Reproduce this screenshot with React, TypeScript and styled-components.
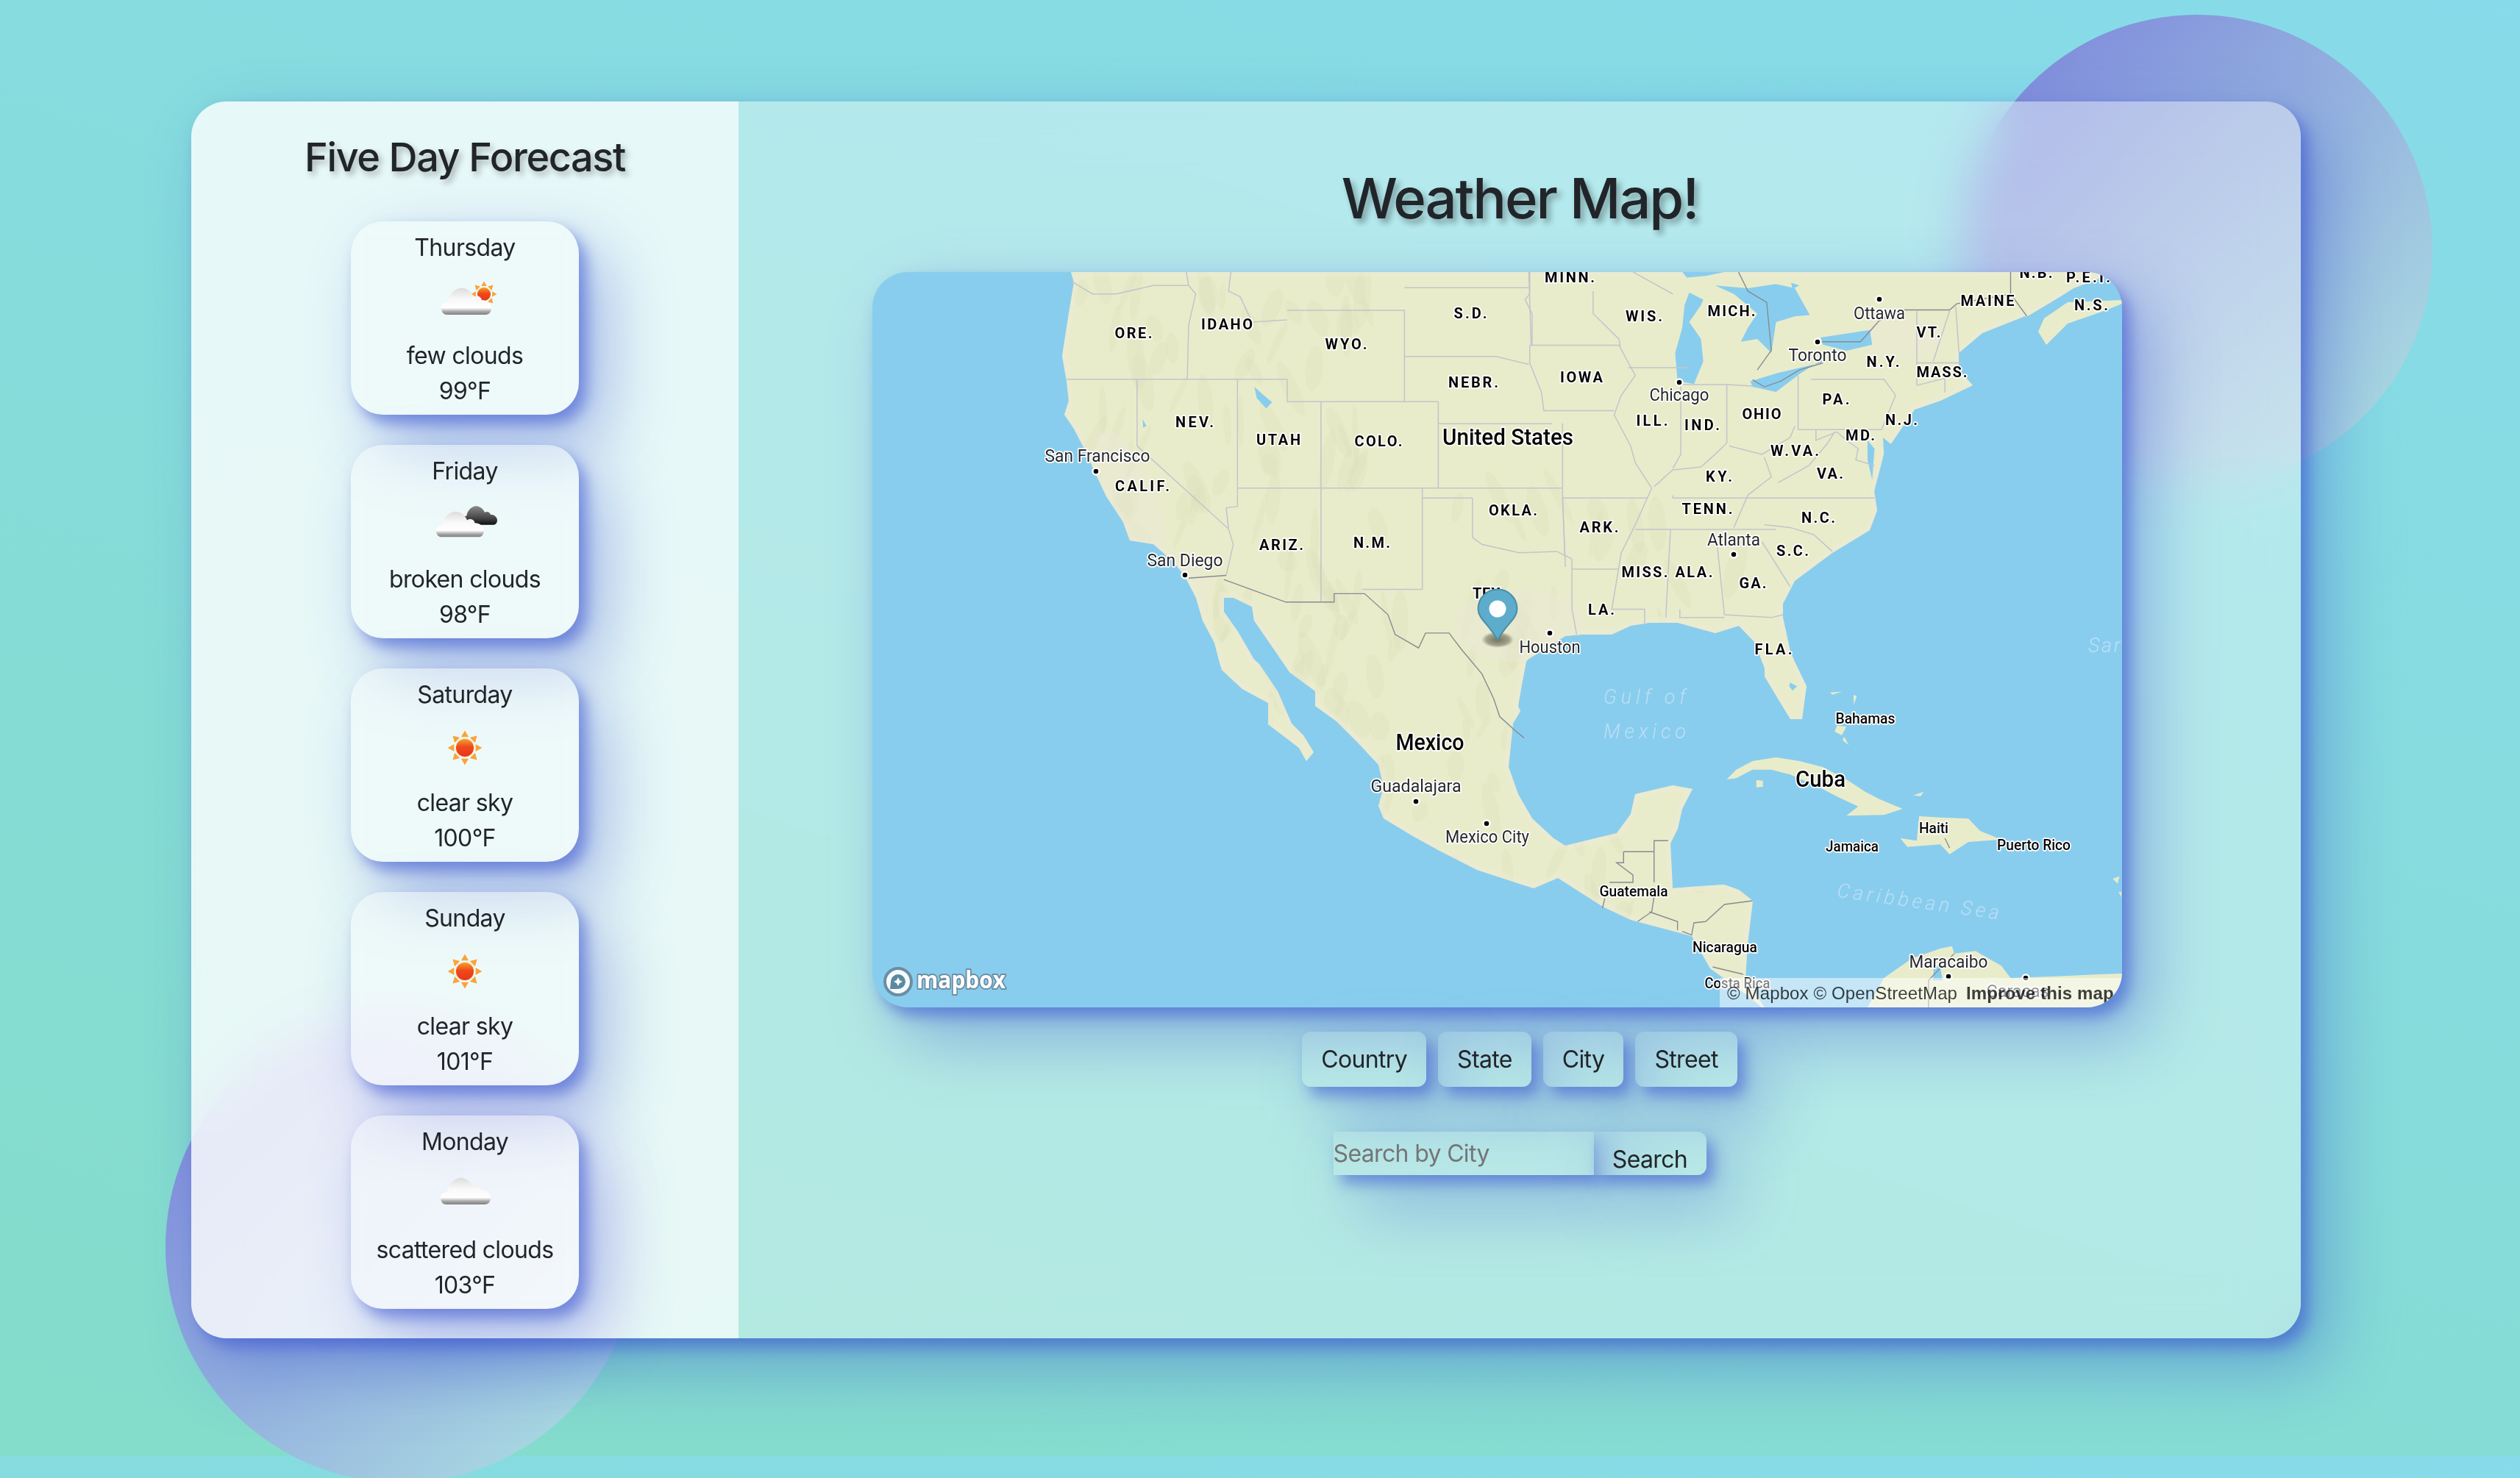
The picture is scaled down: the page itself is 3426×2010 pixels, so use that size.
import React from 'react';
import styled, { createGlobalStyle } from 'styled-components';

const GlobalStyle = createGlobalStyle`
  html { overflow: hidden; }
  body {
    margin: 0;
    height: 1980px;
    background: linear-gradient(198deg, #87dbea 0%, #84dcca 100%);
    font-family: Inter, "Liberation Sans", sans-serif;
    color: #212529;
  }
  input::placeholder { color: #757575; opacity: 1; }
`;

const glowShadow = '10px 12px 20px rgba(58, 84, 208, 0.55), 36px 40px 90px rgba(58, 84, 208, 0.4)';

const Page = styled.div`
  padding: 138px 0 0 260px;
  box-sizing: border-box;
  height: 1980px;
`;

const Circle = styled.div<{ $left: number; $top: number }>`
  position: absolute;
  left: ${p => p.$left}px;
  top: ${p => p.$top}px;
  width: 640px;
  height: 640px;
  border-radius: 50%;
  background: linear-gradient(135deg, #7f8adc 8%, #a9d8e1 88%);
`;

const Panel = styled.main`
  position: relative;
  width: 2868px;
  height: 1682px;
  display: flex;
  border-radius: 48px;
  box-shadow: ${glowShadow};

  &::before {
    content: '';
    position: absolute;
    inset: 0;
    border-radius: 48px;
    background: rgba(255, 255, 255, 0.38);
    backdrop-filter: blur(34px);
  }
`;

const Sidebar = styled.aside`
  position: relative;
  width: 744px;
  flex: none;
  border-radius: 48px 0 0 48px;
  background: rgba(255, 255, 255, 0.68);
  display: flex;
  flex-direction: column;
  align-items: center;
  padding-top: 42px;
  box-sizing: border-box;
`;

const SideTitle = styled.h2`
  margin: 0 0 54px;
  font-size: 54px;
  line-height: 67px;
  font-weight: 550;
  letter-spacing: -1.4px;
  text-shadow: 4px 5px 8px rgba(0, 0, 0, 0.3);
`;

const CardList = styled.div`
  display: flex;
  flex-direction: column;
  gap: 41px;
`;

const Card = styled.article`
  width: 310px;
  height: 263px;
  padding-top: 12px;
  box-sizing: border-box;
  border-radius: 44px;
  background: rgba(255, 255, 255, 0.3);
  backdrop-filter: blur(10px);
  box-shadow: ${glowShadow};
  display: flex;
  flex-direction: column;
  align-items: center;
  font-size: 32px;
  line-height: 48px;
  letter-spacing: -0.65px;
`;

const IconBox = styled.svg`
  width: 100px;
  height: 100px;
  display: block;
  margin-bottom: -1px;
`;

const Content = styled.section`
  position: relative;
  flex: 1;
  display: flex;
  flex-direction: column;
  align-items: center;
`;

const MainTitle = styled.h1`
  margin: 85px 0 55px;
  font-size: 76px;
  line-height: 92px;
  font-weight: 550;
  letter-spacing: -2.1px;
  text-shadow: 5px 6px 9px rgba(0, 0, 0, 0.32);
`;

const MapFrame = styled.div`
  position: relative;
  align-self: flex-start;
  margin-left: 182px;
  width: 1699px;
  height: 1000px;
  border-radius: 48px;
  background: #89cdee;
  box-shadow: ${glowShadow};
`;

const MapClip = styled.div`
  position: relative;
  height: 100%;
  border-radius: 48px;
  overflow: hidden;
`;

const MapSvg = styled.svg`
  display: block;
  width: 1699px;
  height: 1000px;
`;

const Attribution = styled.div`
  position: absolute;
  right: 0;
  bottom: 0;
  width: 547px;
  height: 40px;
  box-sizing: border-box;
  padding-left: 10px;
  background: rgba(255, 255, 255, 0.5);
  font-family: "Liberation Sans", Arial, sans-serif;
  font-size: 24px;
  line-height: 42px;
  letter-spacing: 0.12px;
  color: rgba(0, 0, 0, 0.75);
  white-space: nowrap;
  overflow: hidden;
`;

const Improve = styled.b`
  margin-left: 12px;
`;

const ButtonRow = styled.div`
  display: flex;
  gap: 16px;
  margin-top: 33px;
`;

const PillButton = styled.button`
  height: 75px;
  padding: 0 26px;
  border: 0;
  border-radius: 12px;
  background: rgba(255, 255, 255, 0.1);
  backdrop-filter: blur(14px);
  box-shadow: ${glowShadow};
  font-family: inherit;
  font-size: 32px;
  line-height: 48px;
  color: #212529;
  letter-spacing: -0.65px;
`;

const SearchRow = styled.form`
  display: flex;
  margin-top: 61px;
`;

const SearchInput = styled.input`
  width: 354px;
  height: 59px;
  padding: 0;
  box-sizing: border-box;
  border: 0;
  outline: 0;
  background: rgba(255, 255, 255, 0.1);
  backdrop-filter: blur(14px);
  box-shadow: ${glowShadow};
  font-family: inherit;
  font-size: 32px;
  letter-spacing: -0.65px;
`;

const SearchButton = styled.button`
  width: 153px;
  height: 59px;
  padding: 14px 0 0;
  box-sizing: border-box;
  border: 0;
  border-radius: 0 12px 12px 0;
  background: rgba(255, 255, 255, 0.1);
  backdrop-filter: blur(14px);
  box-shadow: ${glowShadow};
  font-family: inherit;
  font-size: 32px;
  line-height: 48px;
  color: #212529;
  letter-spacing: -0.65px;
`;

/* ---- map parts ---- */

const Land = styled.path`
  fill: #e9ecca;
`;

const CoastWash = styled.path`
  fill: none;
  stroke: #ecead6;
  stroke-width: 14;
  opacity: 0.5;
`;

const Water = styled.path`
  fill: #89cdee;
`;

const Ridge = styled.ellipse`
  fill: #d8ddb4;
  opacity: 0.2;
`;

const Pale = styled.ellipse`
  fill: #ece8da;
  opacity: 0.4;
`;

const StateLine = styled.path`
  fill: none;
  stroke: #c2c4cc;
  stroke-width: 1.5;
  vector-effect: non-scaling-stroke;
`;

const NationLine = styled.path`
  fill: none;
  stroke: #868b92;
  stroke-width: 1.4;
  vector-effect: non-scaling-stroke;
`;

type LabelKind = 'state' | 'city' | 'country' | 'small' | 'sea';

const sizes: Record<LabelKind, number> = { state: 20, city: 24, country: 32, small: 21, sea: 27 };
const weights: Record<LabelKind, number> = { state: 700, city: 400, country: 500, small: 500, sea: 300 };

const MapText = styled.text<{ $kind: LabelKind }>`
  font-family: Roboto, "Liberation Sans", sans-serif;
  font-size: ${p => sizes[p.$kind]}px;
  font-weight: ${p => weights[p.$kind]};
  font-style: ${p => (p.$kind === 'sea' ? 'italic' : 'normal')};
  fill: ${p => (p.$kind === 'sea' ? '#bcdff5' : p.$kind === 'city' ? '#26282c' : '#050505')};
  stroke: ${p => (p.$kind === 'sea' ? 'none' : '#ffffff')};
  stroke-width: 3.5px;
  stroke-linejoin: round;
  paint-order: stroke;
  text-anchor: middle;
  dominant-baseline: central;
`;

const CityDot = styled.circle`
  fill: #000;
  stroke: #fff;
  stroke-width: 2.5;
`;

const LogoWord = styled.text`
  font-family: "Open Sans", "Liberation Sans", sans-serif;
  font-weight: 700;
  font-size: 33px;
  fill: #fff;
  stroke: #6b8ea3;
  stroke-width: 4px;
  stroke-linejoin: round;
  paint-order: stroke;
`;

const FRAME2 = 'translate(-26,-20) scale(0.6378,0.3827)';
const FRAME3 = 'translate(814,-20) scale(0.6378,0.3827)';
const FRAME5 = 'translate(814,530) scale(0.6378,0.3333)';

const MAIN_LAND =
  'M270,0 L274,14 267,56 258,114 264,148 267,175 261,194 274,213 290,244 302,271 318,305 341,340 350,365 382,370 408,393 424,412 440,443 449,474 465,504 472,531 475,541 503,567 538,586 538,615 580,647 590,665 600,653 586,630 570,614 551,570 526,533 519,527 497,489 478,462 478,443 491,443 516,455 519,474 548,516 567,544 602,570 602,590 631,611 660,640 688,670 695,700 688,726 695,743 733,766 771,787 822,813 880,832 899,838 932,824 993,863 1031,881 1095,898 1114,903 1139,947 1190,984 1209,1000 1213,1000 1187,960 1190,914 1197,855 1178,840 1158,833 1127,835 1088,838 1085,777 1095,757 1101,730 1115,703 1088,698 1037,710 1031,737 1012,763 983,770 942,780 926,770 897,743 878,710 865,673 871,614 881,597 878,590 883,561 889,530 891,527 942,495 964,493 1005,493 1031,481 1056,477 1095,477 1146,491 1178,481 1200,504 1213,539 1213,550 1248,608 1264,608 1270,563 1254,530 1248,516 1238,470 1238,451 1254,420 1305,382 1356,351 1366,324 1362,298 1375,248 1401,210 1417,187 1452,175 1496,154 1477,133 1477,110 1509,83 1567,60 1569,61 1614,34 1633,22 1665,10 1683,0 Z';

const NOVA_SCOTIA = 'M1585,81 L1596,99 1625,70 1677,52 1699,43 1699,38 1625,41 1593,63 Z';

const ISLANDS = [
  'M545,480 L565,440 600,405 650,390 700,405 750,430 800,480 840,530 870,560 920,600 880,625 800,628 825,590 780,550 740,510 680,460 640,440 600,440 565,475 Z',
  'M608,482 L622,485 622,510 608,512 Z',
  'M915,720 L950,730 955,630 1000,635 1060,640 1085,690 1130,725 1060,735 1020,785 1000,745 930,755 Z',
  'M780,260 L800,265 790,300 775,285 Z',
  'M795,305 L805,340 792,320 Z',
  'M765,125 L790,122 770,134 Z',
  'M815,135 L822,140 816,175 Z',
  'M942,545 L965,530 958,548 Z',
  'M845,1410 L880,1290 940,1210 1000,1170 1025,1160 1030,1190 1075,1180 1130,1240 1150,1290 1290,1280 1340,1275 1390,1272 1390,1410 Z',
  'M1368,885 L1382,875 1378,905 Z',
  'M1380,938 L1386,940 1386,960 Z',
];

type Label = { t: string; x: number; y: number; w: number; k: LabelKind; r?: number };

const LABELS: Label[] = [
  { t: 'MINN.', x: 948, y: 7, w: 68, k: 'state' },
  { t: 'S.D.', x: 813, y: 56, w: 45, k: 'state' },
  { t: 'ORE.', x: 355, y: 83, w: 51, k: 'state' },
  { t: 'IDAHO', x: 482, y: 71, w: 70, k: 'state' },
  { t: 'WYO.', x: 644, y: 98, w: 57, k: 'state' },
  { t: 'NEBR.', x: 817, y: 150, w: 68, k: 'state' },
  { t: 'IOWA', x: 964, y: 143, w: 58, k: 'state' },
  { t: 'WIS.', x: 1049, y: 60, w: 50, k: 'state' },
  { t: 'MICH.', x: 1168, y: 53, w: 65, k: 'state' },
  { t: 'MAINE', x: 1516, y: 39, w: 73, k: 'state' },
  { t: 'N.S.', x: 1657, y: 45, w: 46, k: 'state' },
  { t: 'P.E.I.', x: 1653, y: 7, w: 60, k: 'state' },
  { t: 'N.B.', x: 1582, y: 1, w: 45, k: 'state' },
  { t: 'VT.', x: 1436, y: 82, w: 33, k: 'state' },
  { t: 'N.Y.', x: 1374, y: 122, w: 45, k: 'state' },
  { t: 'MASS.', x: 1454, y: 136, w: 69, k: 'state' },
  { t: 'PA.', x: 1310, y: 173, w: 37, k: 'state' },
  { t: 'ILL.', x: 1060, y: 202, w: 43, k: 'state' },
  { t: 'IND.', x: 1128, y: 208, w: 48, k: 'state' },
  { t: 'OHIO', x: 1209, y: 193, w: 53, k: 'state' },
  { t: 'N.J.', x: 1399, y: 201, w: 44, k: 'state' },
  { t: 'MD.', x: 1343, y: 222, w: 40, k: 'state' },
  { t: 'W.VA.', x: 1254, y: 243, w: 66, k: 'state' },
  { t: 'VA.', x: 1302, y: 274, w: 36, k: 'state' },
  { t: 'KY.', x: 1151, y: 278, w: 36, k: 'state' },
  { t: 'TENN.', x: 1135, y: 322, w: 69, k: 'state' },
  { t: 'N.C.', x: 1286, y: 334, w: 46, k: 'state' },
  { t: 'ARK.', x: 988, y: 347, w: 53, k: 'state' },
  { t: 'S.C.', x: 1251, y: 379, w: 44, k: 'state' },
  { t: 'MISS.', x: 1050, y: 408, w: 63, k: 'state' },
  { t: 'ALA.', x: 1117, y: 408, w: 51, k: 'state' },
  { t: 'GA.', x: 1197, y: 423, w: 37, k: 'state' },
  { t: 'LA.', x: 991, y: 459, w: 36, k: 'state' },
  { t: 'FLA.', x: 1225, y: 513, w: 51, k: 'state' },
  { t: 'OKLA.', x: 871, y: 324, w: 66, k: 'state' },
  { t: 'TEX.', x: 838, y: 437, w: 44, k: 'state' },
  { t: 'NEV.', x: 438, y: 204, w: 52, k: 'state' },
  { t: 'UTAH', x: 552, y: 228, w: 60, k: 'state' },
  { t: 'COLO.', x: 688, y: 230, w: 65, k: 'state' },
  { t: 'CALIF.', x: 367, y: 291, w: 74, k: 'state' },
  { t: 'ARIZ.', x: 556, y: 371, w: 60, k: 'state' },
  { t: 'N.M.', x: 679, y: 368, w: 50, k: 'state' },
  { t: 'Ottawa', x: 1369, y: 56, w: 70, k: 'city' },
  { t: 'Toronto', x: 1285, y: 113, w: 79, k: 'city' },
  { t: 'Chicago', x: 1097, y: 167, w: 81, k: 'city' },
  { t: 'Atlanta', x: 1171, y: 364, w: 72, k: 'city' },
  { t: 'Houston', x: 921, y: 510, w: 83, k: 'city' },
  { t: 'San Francisco', x: 306, y: 250, w: 143, k: 'city' },
  { t: 'San Diego', x: 425, y: 392, w: 103, k: 'city' },
  { t: 'Guadalajara', x: 739, y: 699, w: 123, k: 'city' },
  { t: 'Mexico City', x: 836, y: 768, w: 114, k: 'city' },
  { t: 'Maracaibo', x: 1463, y: 938, w: 107, k: 'city' },
  { t: 'Caracas', x: 1557, y: 978, w: 85, k: 'city' },
  { t: 'United States', x: 864, y: 224, w: 178, k: 'country' },
  { t: 'Mexico', x: 758, y: 639, w: 93, k: 'country' },
  { t: 'Cuba', x: 1289, y: 689, w: 68, k: 'country' },
  { t: 'Bahamas', x: 1350, y: 607, w: 81, k: 'small' },
  { t: 'Haiti', x: 1443, y: 756, w: 40, k: 'small' },
  { t: 'Jamaica', x: 1332, y: 781, w: 72, k: 'small' },
  { t: 'Puerto Rico', x: 1579, y: 779, w: 100, k: 'small' },
  { t: 'Guatemala', x: 1035, y: 842, w: 93, k: 'small' },
  { t: 'Nicaragua', x: 1159, y: 918, w: 88, k: 'small' },
  { t: 'Costa Rica', x: 1176, y: 967, w: 89, k: 'small' },
  { t: 'Gulf of', x: 1050, y: 578, w: 112, k: 'sea' },
  { t: 'Mexico', x: 1050, y: 625, w: 112, k: 'sea' },
  { t: 'Caribbean Sea', x: 1422, y: 856, w: 222, k: 'sea', r: 8 },
  { t: 'Sargasso', x: 1716, y: 508, w: 126, k: 'sea' },
];

const DOTS: [number, number][] = [
  [1369, 37], [1285, 95], [1097, 150], [1171, 384], [921, 491], [304, 271],
  [425, 412], [739, 720], [835, 750], [1463, 958], [1568, 960],
];

/* hill-shade strokes, placed by a small repeatable generator */
const ridges = (() => {
  const out: { x: number; y: number; a: number; b: number; r: number }[] = [];
  let s = 11;
  const next = () => {
    s = (s * 1103515245 + 12345) % 2147483648;
    return s / 2147483648;
  };
  for (let i = 0; i < 220; i += 1) {
    const west = next() < 0.72;
    out.push({
      x: west ? 280 + next() * 420 : 700 + next() * 480,
      y: west ? next() * 850 : 300 + next() * 580,
      a: 4 + next() * 10,
      b: 14 + next() * 30,
      r: -30 + next() * 60,
    });
  }
  return out;
})();

const WorldMap = () => (
  <MapSvg viewBox="0 0 1699 1000">
    <defs>
      <clipPath id="land-clip">
        <path d={MAIN_LAND} />
      </clipPath>
      <radialGradient id="pin-shadow">
        <stop offset="0%" stopColor="#4c4c34" stopOpacity="0.75" />
        <stop offset="70%" stopColor="#4c4c34" stopOpacity="0.45" />
        <stop offset="100%" stopColor="#4c4c34" stopOpacity="0" />
      </radialGradient>
    </defs>
    <Land d={MAIN_LAND} />
    <g clipPath="url(#land-clip)">
      {ridges.map((e, i) => (
        <Ridge key={i} cx={e.x} cy={e.y} rx={e.a} ry={e.b} transform={`rotate(${e.r} ${e.x} ${e.y})`} />
      ))}
      <Pale cx={350} cy={300} rx={34} ry={90} transform="rotate(-24 350 300)" />
      <Pale cx={430} cy={430} rx={30} ry={40} />
      <Pale cx={1400} cy={90} rx={60} ry={30} />
      <Pale cx={880} cy={480} rx={90} ry={50} />
      <CoastWash d={MAIN_LAND} />
    </g>
    <Land d={NOVA_SCOTIA} />
    <g transform={FRAME5}>
      {ISLANDS.map(d => (
        <Land key={d} d={d} />
      ))}
      <Water d="M986,1240 L1000,1245 1005,1300 985,1300 Z" />
      <Water d="M680,85 L695,100 685,118 678,100 Z" />
      <NationLine d="M325,775 H390 V730 L420,730 M325,775 V820 H310 L345,870 V900 H295 M390,775 V900 M285,965 L280,1005 M390,960 L385,1020 355,1060 M380,1020 L440,1060 V1095 M450,1100 L470,1115 475,1065 500,1060 540,990 600,975 M515,1245 L580,1275 M1010,720 L1020,760 M1030,1190 L975,1300 975,1410" />
    </g>
    <g transform={FRAME3}>
      <Water d="M450,52 H540 L500,66 460,72 Z" />
      <Water d="M465,125 L495,150 490,170 465,230 490,290 495,370 475,450 440,440 435,340 450,250 455,170 Z" />
      <Water d="M520,100 L590,110 650,95 690,110 722,205 690,210 650,230 640,340 610,290 575,300 590,250 610,200 560,130 Z" />
      <Water d="M595,440 L655,410 745,375 760,350 700,415 650,478 600,460 Z" />
      <Water d="M745,285 L850,258 855,310 800,332 750,310 Z" />
      <Water d="M845,650 L860,680 855,790 845,720 Z" />
      <Water d="M878,640 L900,670 880,705 Z" />
      <Water d="M682,90 L700,100 685,112 Z" />
      <StateLine d="M125,52 V130 L115,150 130,200 V312 M125,312 H318 M125,312 V375 L150,480 155,545 H305 M345,52 L430,130 M260,120 V200 L315,290 318,312 M335,392 H465 M315,312 L350,420 320,490 305,560 340,670 350,730 385,820 M447,450 V700 L430,750 M447,452 H545 L600,457 M545,452 V660 M697,420 V612 M725,433 H880 L905,490 890,550 875,612 H697 M735,612 V650 L780,620 800,650 825,680 820,720 860,740 M545,660 L520,700 490,745 430,755 390,815 M690,600 L680,640 620,700 550,670 M625,710 L640,780 590,845 M655,800 L720,740 760,660 775,620 M430,845 V855 H860 M350,967 H650 M590,845 L560,960 M625,950 L680,960 730,985 770,1045 M620,1010 L680,1170 M525,1030 L540,1270 640,1280 665,1270 M425,967 L415,1280 M445,1250 V1280 H540 M385,820 L350,950 320,1050 300,1250 H370 V1300 M215,1108 H315 M195,855 H375 M195,855 L200,1065 M215,1070 V1250 L225,1340 M950,190 V455 M1033,175 L1040,340 M950,375 H1045 M1020,190 L985,370 M950,455 L1010,430 V480" />
      <NationLine d="M570,52 L590,120 630,160 640,330 610,400 M600,435 L625,460 660,440 700,400 750,375 M745,300 H830 L870,225 920,187 H1020 L1035,165 1150,130 V52 M1150,130 L1185,210" />
    </g>
    <g transform={FRAME2}>
      <Water d="M855,460 L875,490 893,515 880,537 860,500 Z" />
      <Water d="M617,575 L625,600 618,605 Z" />
      <StateLine d="M465,85 L510,130 H560 L640,100 H715 M715,100 L730,130 715,240 712,433 M455,433 H925 M605,435 V670 L800,965 810,1020 795,1130 M819,433 V885 L795,890 800,965 M925,433 V513 H1247 M925,188 H1175 V513 M710,52 L715,100 M805,52 L800,120 825,140 850,230 925,222 M1175,108 H1440 M1175,352 H1370 L1440,380 M1247,591 H1490 M1247,513 V820 M997,513 V1225 M819,820 H1510 M1213,855 H1320 M1213,820 V1180 H1085 M1320,855 V995 L1340,1020 1420,1050 1500,1045 1530,1070 M1512,590 V855 L1518,1100 M1440,52 L1445,312" />
      <NationLine d="M715,1140 L795,1130 M790,1145 L922,1225 H1025 V1195 H1090 L1140,1270 1155,1340 1205,1388 1220,1335 1270,1335 1295,1390 1340,1480 1365,1568 1378,1632 1410,1680 1430,1708" />
    </g>
    {DOTS.map(([x, y]) => (
      <CityDot key={`${x}-${y}`} cx={x} cy={y} r={4.5} />
    ))}
    {LABELS.map(l => (
      <MapText
        key={l.t + l.x}
        $kind={l.k}
        x={l.x}
        y={l.y}
        textLength={l.w}
        lengthAdjust={l.k === 'state' || l.k === 'sea' ? 'spacing' : 'spacingAndGlyphs'}
        transform={l.r ? `rotate(${l.r} ${l.x} ${l.y})` : undefined}
      >
        {l.t}
      </MapText>
    ))}
    <ellipse cx={850} cy={500} rx={22} ry={11} fill="url(#pin-shadow)" />
    <path
      d="M850,501 C840,480 823.5,472 823.5,458 A26.5,26.5 0 1 1 876.5,458 C876.5,472 860,480 850,501 Z"
      fill="#5eaccc"
      stroke="#4a8ea8"
      strokeWidth="2"
    />
    <circle cx={850} cy={458} r={11.5} fill="#fff" />
    <circle cx={35} cy={965} r={18} fill="#f6fbff" stroke="#6b8ea3" strokeWidth="4" />
    <circle cx={35} cy={965} r={10} fill="#5b8aa0" />
    <path d="M24,975 L25,966 34,975 Z" fill="#5b8aa0" />
    <path d="M35,959 L37,963 41,965 37,967 35,971 33,967 29,965 33,963 Z" fill="#fff" />
    <LogoWord x={60} y={974} textLength={121} lengthAdjust="spacingAndGlyphs">
      mapbox
    </LogoWord>
  </MapSvg>
);

/* ---- weather icons ---- */

const CLOUD =
  'M8,38 C2,38 0,33 0,29 C0,24 4,21 9,21 C10,10 20,0 30,2 C37,3 42,9 44,14 C48,11 54,13 55,18 C62,18 68,23 68,29 C68,34 65,38 60,38 Z';

const Sun = ({ cx, cy, r, id }: { cx: number; cy: number; r: number; id: string }) => (
  <g>
    {Array.from({ length: 8 }, (_, i) => (
      <path
        key={i}
        d={`M${cx - r * 0.42},${cy - r * 1.22} L${cx},${cy - r * 1.95} L${cx + r * 0.42},${cy - r * 1.22} Z`}
        fill="#f8a43a"
        transform={`rotate(${i * 45} ${cx} ${cy})`}
      />
    ))}
    <circle cx={cx} cy={cy} r={r * 1.08} fill="#fbe7b0" />
    <circle cx={cx} cy={cy} r={r} fill={`url(#sun-${id})`} />
  </g>
);

const CloudShape = ({ x, y, w, id, dark }: { x: number; y: number; w: number; id: string; dark?: boolean }) => (
  <path
    d={CLOUD}
    fill={`url(#${dark ? 'dark' : 'cloud'}-${id})`}
    transform={`translate(${x} ${y}) scale(${w / 68})`}
  />
);

const WeatherIcon = ({ kind, id }: { kind: 'few' | 'broken' | 'clear' | 'scattered'; id: string }) => (
  <IconBox viewBox="0 0 100 100">
    <defs>
      <linearGradient id={`cloud-${id}`} x1="0" y1="0" x2="0" y2="1">
        <stop offset="0%" stopColor="#dcdcdc" />
        <stop offset="40%" stopColor="#f8f8f8" />
        <stop offset="74%" stopColor="#ffffff" />
        <stop offset="88%" stopColor="#a8a8a8" />
        <stop offset="100%" stopColor="#808080" />
      </linearGradient>
      <linearGradient id={`dark-${id}`} x1="0" y1="0" x2="0" y2="1">
        <stop offset="0%" stopColor="#8a8a8a" />
        <stop offset="60%" stopColor="#4a4a4a" />
        <stop offset="100%" stopColor="#111" />
      </linearGradient>
      <linearGradient id={`sun-${id}`} x1="0" y1="0" x2="0" y2="1">
        <stop offset="0%" stopColor="#f7a02c" />
        <stop offset="45%" stopColor="#ee4a1c" />
        <stop offset="100%" stopColor="#ea3420" />
      </linearGradient>
      <filter id={`soft-${id}`}>
        <feGaussianBlur stdDeviation="0.6" />
      </filter>
    </defs>
    <g filter={`url(#soft-${id})`}>
      {kind === 'clear' && <Sun cx={50} cy={48} r={12} id={id} />}
      {kind === 'few' && (
        <>
          <Sun cx={76} cy={39} r={9} id={id} />
          <CloudShape x={18} y={29} w={68} id={id} />
        </>
      )}
      {kind === 'broken' && (
        <>
          <CloudShape x={46} y={22} w={48} id={id} dark />
          <CloudShape x={11} y={29} w={65} id={id} />
        </>
      )}
      {kind === 'scattered' && <CloudShape x={17} y={23} w={68} id={id} />}
    </g>
  </IconBox>
);

const FORECAST = [
  { day: 'Thursday', text: 'few clouds', temp: '99°F', icon: 'few' },
  { day: 'Friday', text: 'broken clouds', temp: '98°F', icon: 'broken' },
  { day: 'Saturday', text: 'clear sky', temp: '100°F', icon: 'clear' },
  { day: 'Sunday', text: 'clear sky', temp: '101°F', icon: 'clear' },
  { day: 'Monday', text: 'scattered clouds', temp: '103°F', icon: 'scattered' },
] as const;

export default function App() {
  return (
    <>
      <GlobalStyle />
      <Circle $left={2667} $top={20} />
      <Circle $left={225} $top={1376} />
      <Page>
        <Panel>
          <Sidebar>
            <SideTitle>Five Day Forecast</SideTitle>
            <CardList>
              {FORECAST.map(f => (
                <Card key={f.day}>
                  <div>{f.day}</div>
                  <WeatherIcon kind={f.icon} id={f.day} />
                  <div>{f.text}</div>
                  <div>{f.temp}</div>
                </Card>
              ))}
            </CardList>
          </Sidebar>
          <Content>
            <MainTitle>Weather Map!</MainTitle>
            <MapFrame>
              <MapClip>
                <WorldMap />
                <Attribution>
                  © Mapbox © OpenStreetMap<Improve>Improve this map</Improve>
                </Attribution>
              </MapClip>
            </MapFrame>
            <ButtonRow>
              <PillButton type="button">Country</PillButton>
              <PillButton type="button">State</PillButton>
              <PillButton type="button">City</PillButton>
              <PillButton type="button">Street</PillButton>
            </ButtonRow>
            <SearchRow>
              <SearchInput placeholder="Search by City" />
              <SearchButton type="button">Search</SearchButton>
            </SearchRow>
          </Content>
        </Panel>
      </Page>
    </>
  );
}
